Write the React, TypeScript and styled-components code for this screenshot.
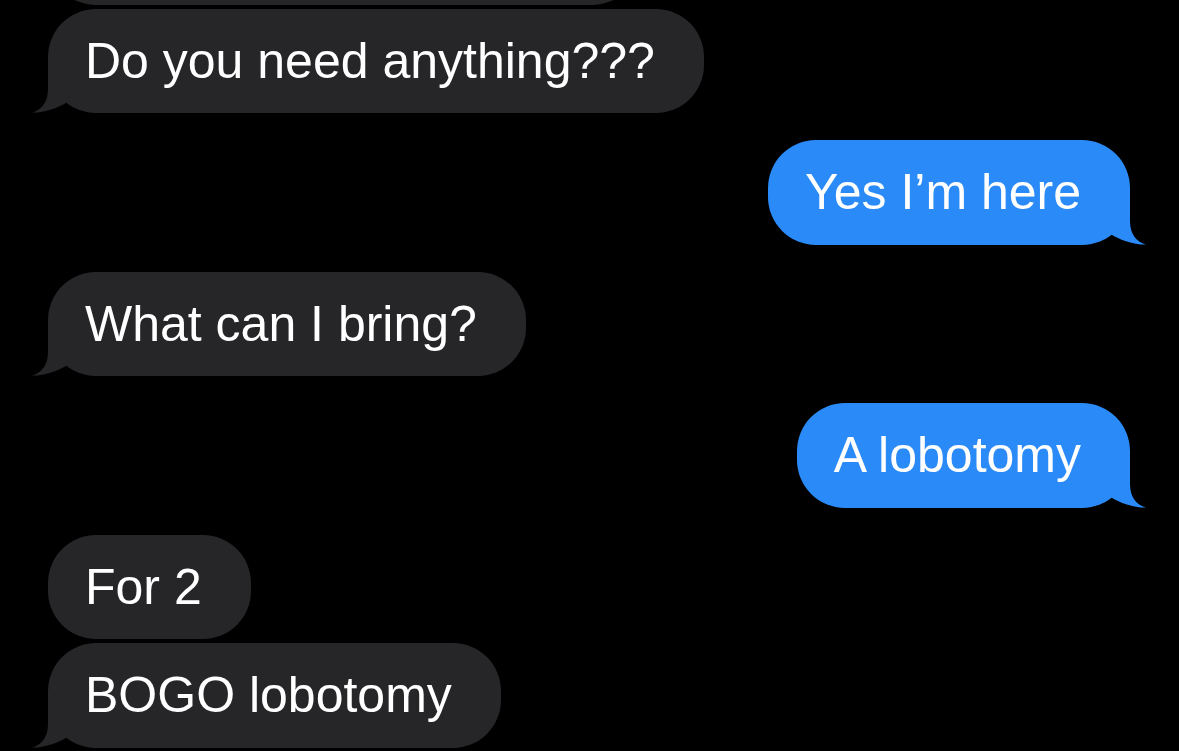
import React from 'react';
import styled, { createGlobalStyle } from 'styled-components';

type Side = 'them' | 'me';

const GlobalStyle = createGlobalStyle`
  html, body {
    margin: 0;
    padding: 0;
    background: #000;
  }
  body {
    font-family: "Liberation Sans", Arial, sans-serif;
  }
`;

const Screen = styled.main`
  width: 100vw;
  height: 100vh;
  overflow: hidden;
  background: #000;
`;

const Thread = styled.div`
  display: flex;
  flex-direction: column;
  gap: 27px;
  padding: 0 49px 0 48px;
  margin-top: -100px;
`;

const Group = styled.div<{ $side: Side }>`
  display: flex;
  flex-direction: column;
  gap: 4px;
  align-items: ${(p) => (p.$side === 'me' ? 'flex-end' : 'flex-start')};
`;

const colors = {
  them: '#262629',
  me: '#2a8bf8',
};

const Bubble = styled.div<{ $side: Side; $width?: number }>`
  position: relative;
  box-sizing: border-box;
  height: 104.5px;
  line-height: 104.5px;
  padding: 0 49px 0 37px;
  border-radius: 48px;
  background: ${(p) => colors[p.$side]};
  color: #fff;
  font-size: 50px;
  white-space: nowrap;
  ${(p) => (p.$width ? `width: ${p.$width}px;` : '')}
`;

const TailSvg = styled.svg<{ $side: Side }>`
  position: absolute;
  bottom: 0;
  display: block;
  overflow: visible;
  ${(p) =>
    p.$side === 'me'
      ? 'right: -16px; transform: scaleX(-1);'
      : 'left: -16px;'}
`;

const Tail = ({ side }: { side: Side }) => (
  <TailSvg $side={side} width="44" height="50" viewBox="0 0 44 50">
    <path
      d="M16 0 L16 26 C16 39 10 46.5 0 49.6 C11 50 26 45.5 36 38.5 L36 0 Z"
      fill={colors[side]}
    />
  </TailSvg>
);

type Msg = { text: string; tail?: boolean; width?: number };

const thread: { side: Side; msgs: Msg[] }[] = [
  {
    side: 'them',
    msgs: [
      { text: '', width: 592 },
      { text: 'Do you need anything???', tail: true },
    ],
  },
  { side: 'me', msgs: [{ text: 'Yes I’m here', tail: true }] },
  { side: 'them', msgs: [{ text: 'What can I bring?', tail: true }] },
  { side: 'me', msgs: [{ text: 'A lobotomy', tail: true }] },
  {
    side: 'them',
    msgs: [{ text: 'For 2' }, { text: 'BOGO lobotomy', tail: true }],
  },
];

const App = () => {
  return (
    <Screen>
      <GlobalStyle />
      <Thread>
        {thread.map((group, gi) => (
          <Group key={gi} $side={group.side}>
            {group.msgs.map((m, mi) => (
              <Bubble key={mi} $side={group.side} $width={m.width}>
                {m.tail && <Tail side={group.side} />}
                {m.text}
              </Bubble>
            ))}
          </Group>
        ))}
      </Thread>
    </Screen>
  );
};

export default App;
